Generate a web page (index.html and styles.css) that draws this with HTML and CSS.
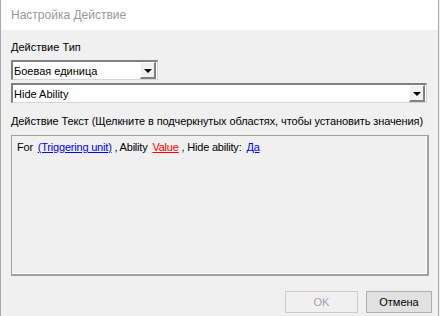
FILE: index.html
```html
<!DOCTYPE html>
<html lang="ru">
<head>
<meta charset="UTF-8" />
<title>Настройка Действие</title>
<link rel="stylesheet" href="styles.css">
</head>
<body>
  <div class="window">
    <div class="titlebar">Настройка Действие</div>
    <div class="content">
      <div class="label">Действие Тип</div>
      <div class="combo combo-short">
        <span class="combo-text">Боевая единица</span>
        <span class="combo-btn"><span class="arrow"></span></span>
      </div>
      <div class="combo combo-wide">
        <span class="combo-text">Hide Ability</span>
        <span class="combo-btn"><span class="arrow"></span></span>
      </div>
      <div class="label label-text">Действие Текст (Щелкните в подчеркнутых областях, чтобы установить значения)</div>
      <div class="textbox">
        For <a class="link">(Triggering unit)</a> , Ability <a class="link link-red">Value</a> , Hide ability: <a class="link">Да</a>
      </div>
      <div class="buttons">
        <button class="btn btn-ok" disabled>OK</button>
        <button class="btn btn-cancel">Отмена</button>
      </div>
    </div>
  </div>
</body>
</html>
```

FILE: styles.css
```css
body {
  margin: 0;
  font-family: 'Liberation Sans', Arial, sans-serif;
  font-size: 11px;
  color: #000;
  background: #f0f0f0;
}
.window {
  width: 437px;
  height: 316px;
  border-left: 1px solid #aaa;
  border-right: 1px solid #aaa;
  background: #f0f0f0;
  display: flex;
  flex-direction: column;
}
.titlebar {
  height: 30px;
  background: #fff;
  color: #999;
  font-size: 12px;
  line-height: 30px;
  padding-left: 10px;
}
.content {
  flex: 1;
  padding: 11px 10px 0 10px;
  display: flex;
  flex-direction: column;
}
.label {
  height: 13px;
  line-height: 13px;
  margin-bottom: 6px;
}
.label-text {
  margin-top: 12px;
  margin-bottom: 7px;
  white-space: nowrap;
  letter-spacing: -0.1px;
}
.combo {
  height: 17px;
  background: #fff;
  border-top: 2px solid #808080;
  border-left: 2px solid #808080;
  border-right: 1px solid #d6d6d6;
  border-bottom: 1px solid #d6d6d6;
  display: flex;
  align-items: center;
  box-sizing: content-box;
}
.combo-short {
  width: 144px;
}
.combo-wide {
  width: 413px;
  margin-top: 3px;
}
.combo-text {
  flex: 1;
  padding-left: 1px;
}
.combo-btn {
  width: 16px;
  height: 17px;
  margin-right: 1px;
  background: #f0f0f0;
  border-top: 1px solid #fff;
  border-left: 1px solid #fff;
  border-right: 2px solid #808080;
  border-bottom: 2px solid #808080;
  box-sizing: border-box;
  display: flex;
  align-items: center;
  justify-content: center;
}
.arrow {
  width: 0;
  height: 0;
  border-left: 4px solid transparent;
  border-right: 4px solid transparent;
  border-top: 4px solid #000;
  margin-top: 1px;
}
.textbox {
  height: 128px;
  width: 405px;
  border-top: 1px solid #a0a0a0;
  border-left: 1px solid #a0a0a0;
  border-right: 2px solid #a0a0a0;
  border-bottom: 2px solid #a0a0a0;
  box-shadow: inset -1px -1px 0 #fff;
  padding: 5px 5px;
  line-height: 13px;
  white-space: nowrap;
  letter-spacing: -0.2px;
}
.link {
  color: #0000ff;
  text-decoration: underline;
  margin-left: 2px;
}
.link-red {
  color: #ff0000;
}
.buttons {
  display: flex;
  justify-content: flex-end;
  gap: 8px;
  margin-top: 15px;
  margin-right: -4px;
}
.btn {
  height: 22px;
  font-family: 'Liberation Sans', Arial, sans-serif;
  font-size: 11px;
  background: #e1e1e1;
  border: 1px solid #adadad;
  padding: 0;
  color: #000;
}
.btn-ok {
  width: 73px;
}
.btn-cancel {
  width: 66px;
}
.btn:disabled {
  background: #f0f0f0;
  border-color: #cccccc;
  color: #a0a0a0;
}
```
